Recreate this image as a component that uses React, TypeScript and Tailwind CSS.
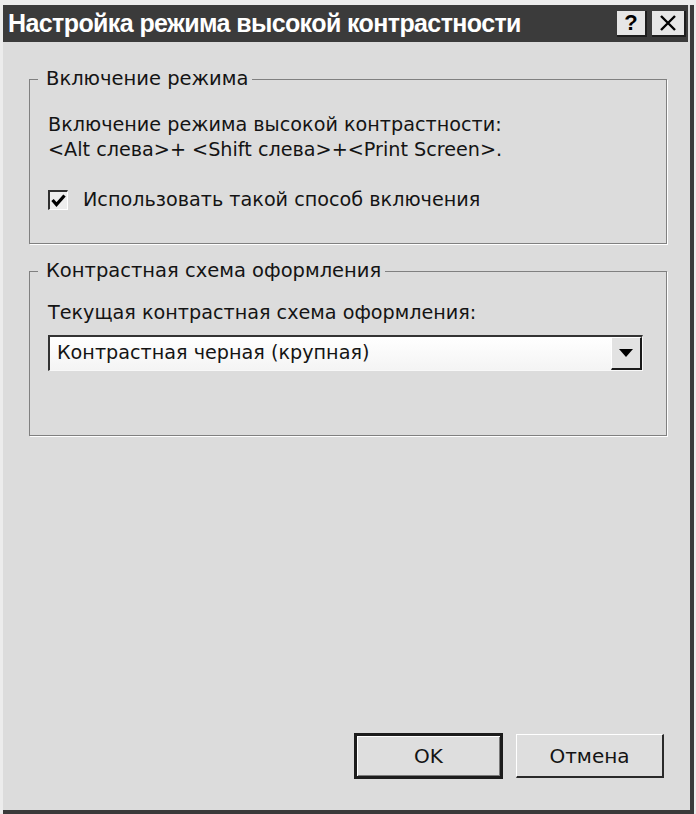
import React from 'react';

const font = { fontFamily: '"DejaVu Sans", "Noto Sans", sans-serif' };

const GroupBox: React.FC<{ title: string; className?: string; children: React.ReactNode }> = ({ title, className, children }) => (
  <fieldset className={`border border-[#808080] shadow-[1px_1px_0_#ffffff] pl-[18px] pr-[23px] ${className ?? ''}`}>
    <legend className="-ml-[10px] pl-[8px] pr-[4px] leading-[22px] text-[19.5px] text-[#141414]">{title}</legend>
    {children}
  </fieldset>
);

const App: React.FC = () => {
  return (
    <div className="w-[696px] h-[814px] bg-[#ececec] pl-[3px] pt-[5px] pr-[2px] select-none" style={font}>
      <div className="h-full flex flex-col bg-[#dcdcdc] border-r-[4px] border-b-[4px] border-[#3a3a3a]">
        {/* Title bar */}
        <div className="h-[37px] mr-[2px] bg-[#3b3b3b] flex items-center pl-[5px] pr-[2px]">
          <span
            className="text-white font-bold text-[25px] leading-none tracking-[-0.6px]"
            style={{ fontFamily: '"Liberation Sans", Arial, sans-serif' }}
          >
            Настройка режима высокой контрастности
          </span>
          <div className="flex-1" />
          <div className="w-[30px] h-[26px] bg-[#e6e6e6] border-r-2 border-b-2 border-[#1e1e1e] flex items-center justify-center">
            <span className="text-black font-bold text-[22px] leading-none" style={{ fontFamily: '"Liberation Sans", Arial, sans-serif' }}>?</span>
          </div>
          <div className="ml-[5px] w-[34px] h-[26px] bg-[#e6e6e6] border-r-2 border-b-2 border-[#1e1e1e] flex items-center justify-center">
            <svg width="18" height="16" viewBox="0 0 18 16">
              <path d="M2 1 L16 15 M16 1 L2 15" stroke="#000" strokeWidth="2.4" />
            </svg>
          </div>
        </div>

        {/* Body */}
        <div className="flex-1 flex flex-col pl-[26px] pr-[23px] text-[19.2px] text-[#141414]">
          <GroupBox title="Включение режима" className="mt-[26px] pb-[31px]">
            <p className="mt-[22px] leading-[25px]">
              Включение режима высокой контрастности:
              <br />
              &lt;Alt слева&gt;+ &lt;Shift слева&gt;+&lt;Print Screen&gt;.
            </p>
            <div className="mt-[26px] h-[24px] flex items-center">
              <div className="w-[20px] h-[20px] bg-[#ededed] border-t-2 border-l-2 border-[#303030] border-r border-b border-r-[#ffffff] border-b-[#ffffff] flex items-center justify-center">
                <svg width="15" height="13" viewBox="0 0 15 13">
                  <path d="M1.5 6 L5.5 10.5 L13.5 1.5" stroke="#000" strokeWidth="3.2" fill="none" />
                </svg>
              </div>
              <span className="ml-[15px] leading-[24px]">Использовать такой способ включения</span>
            </div>
          </GroupBox>

          <GroupBox title="Контрастная схема оформления" className="mt-[16px] pb-[64px]">
            <p className="mt-[18px] leading-[25px]">Текущая контрастная схема оформления:</p>
            <div className="mt-[10px] h-[36px] flex bg-white border-t-2 border-l-2 border-[#333333] border-r border-b border-r-[#f8f8f8] border-b-[#f8f8f8]">
              <div className="flex-1 flex items-center pl-[7px] bg-gradient-to-b from-[#ffffff] to-[#f4f4f4]">
                Контрастная черная (крупная)
              </div>
              <div className="w-[31px] bg-[#e2e2e2] border-t border-l border-[#ffffff] border-r-2 border-b-2 border-r-[#1a1a1a] border-b-[#1a1a1a] flex items-center justify-center">
                <svg width="14" height="8" viewBox="0 0 14 8">
                  <path d="M0 0 H14 L7 8 Z" fill="#000" />
                </svg>
              </div>
            </div>
          </GroupBox>

          <div className="flex-1" />

          {/* Buttons */}
          <div className="flex justify-end gap-[13px] pb-[31px] pr-[3px]">
            <button className="w-[149px] h-[46px] bg-[#dedede] border-[3px] border-[#1c1c1c] shadow-[inset_1px_1px_0_#ffffff,inset_-1px_-1px_0_#7a7a7a] text-[20px] text-[#141414] leading-none">
              OK
            </button>
            <button className="w-[148px] h-[44px] mt-[1px] bg-[#dedede] border-t border-l border-[#ffffff] border-r-2 border-b-2 border-r-[#2a2a2a] border-b-[#2a2a2a] text-[20px] text-[#141414] leading-none">
              Отмена
            </button>
          </div>
        </div>
      </div>
    </div>
  );
};

export default App;
